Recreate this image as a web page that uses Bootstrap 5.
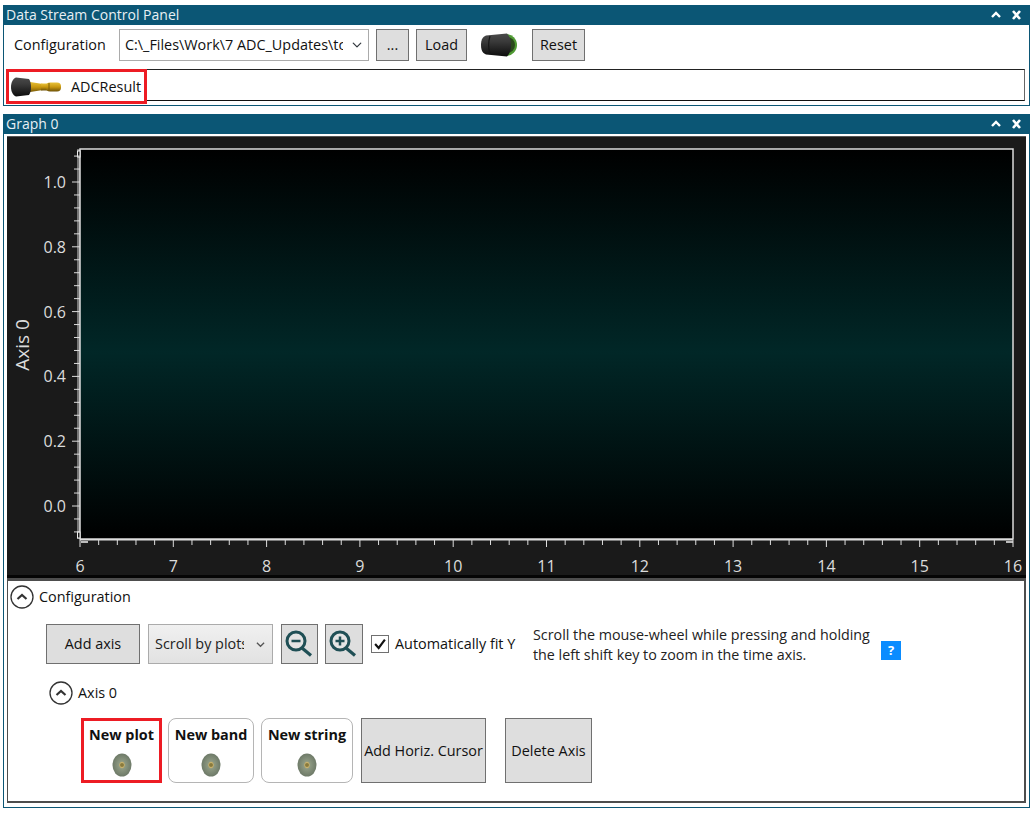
<!DOCTYPE html>
<html lang="en">
<head>
  <meta charset="UTF-8">
  <title>Data Stream Control Panel</title>
  <link href="https://cdn.jsdelivr.net/npm/bootstrap@5.3.2/dist/css/bootstrap.min.css" rel="stylesheet">
  <style>
    body { background: #fff; color: #111; font-family: "Open Sans", "Noto Sans", sans-serif; font-size: 14.4px; line-height: 20px; }
    .win { width: 1027px; margin-left: 3px; border: 1px solid #0b5675; border-top: 0; }
    .win-top { margin-top: 5px; height: 101px; }
    .win-graph { margin-top: 8px; height: 694px; }
    .win-bar { height: 20px; background: #0b5675; color: #e8f0f4; padding: 0 4px 0 2px; font-size: 14px; }
    .cfg-row { height: 44px; padding: 4px 0 0 10px; }
    .cfg-label { width: 105px; line-height: 32px; }
    .grey-btn { --bs-btn-padding-x: 0; --bs-btn-padding-y: 0; --bs-btn-font-size: 14.4px; --bs-btn-color: #111; --bs-btn-bg: #dedede; --bs-btn-border-color: #707070; --bs-btn-border-radius: 0; --bs-btn-hover-bg: #dedede; --bs-btn-hover-border-color: #707070; --bs-btn-line-height: 20px; flex: none; }
    .btn-dots { width: 33px; height: 32px; margin-right: 7px; }
    .btn-load { width: 51px; height: 32px; margin-right: 14px; }
    .btn-reset { width: 53px; height: 32px; margin-left: 15px; }
    .btn-add-axis { width: 94px; margin-right: 8px; }
    .btn-zoom-out { width: 37px; margin-right: 7px; }
    .btn-zoom-in { width: 38px; }
    .btn-cursor { width: 125px; height: 65px; margin-left: 8px; }
    .btn-delete { width: 87px; height: 65px; margin-left: 19px; }
    .sel-file { width: 250px; height: 32px; margin-right: 7px; border: 1px solid #ababab; border-radius: 0; font-size: 14.4px; color: #111; padding: 0 25px 0 5px; background-position: right 6px center; background-size: 10px 10px; }
    .knob-icon { margin-top: 4px; }
    .chan-box { height: 32px; margin: 0 4px 0 2px; border: 1px solid #111; border-top-color: #222; border-left-color: #777; border-right-color: #666; }
    .chan-chip { width: 141px; height: 35px; margin: -1px 0 0 -1px; border: 3px solid #ed1c24; padding-left: 2px; background: #fff; flex: none; }
    .chan-name { margin-left: 10px; }
    .graph-wrap { height: 442px; margin: 2px 3px 0 3px; background: #1a1a1a; border-top: 1px solid #555; }
    .graph-wrap svg { display: block; }
    .graph-text { font-family: "Open Sans", "Noto Sans", sans-serif; font-size: 16px; fill: #dcdcdc; }
    .axis-title { font-size: 19px; }
    .cfg-pane { height: 225px; margin: 0 3px 0 3px; border: 2px solid #4d4d4d; border-top-width: 3px; border-left-width: 1px; background: #fff; }
    .sect-head { height: 24px; }
    .head-config { margin: 4px 0 0 2px; }
    .head-axis { margin: 17px 0 0 41px; }
    .chev-gap { margin-right: 5px; }
    .tools-row { height: 40px; margin: 15px 0 0 38px; }
    .sel-mode { width: 125px; height: 40px; margin-right: 8px; border: 1px solid #ababab; border-radius: 0; font-size: 14.4px; color: #222; padding: 0 28px 0 6px; background: url("data:image/svg+xml,%3csvg xmlns='http://www.w3.org/2000/svg' viewBox='0 0 10 10'%3e%3cpath fill='none' stroke='%23555' stroke-width='1.4' d='M1 3l4 4 4-4'/%3e%3c/svg%3e") no-repeat right 7px center / 9px 9px, linear-gradient(#f0f0f0, #e2e2e2); }
    .fit-block { width: 146px; margin-left: 8px; }
    .fit-check { width: 18px; height: 18px; border: 1px solid #707070; background: #fff; flex: none; margin-right: 6px; }
    .hint-text { width: 348px; margin-left: 16px; padding-top: 1px; line-height: 20px; color: #222; font-size: 14.3px; white-space: nowrap; }
    .help-mark { width: 20px; height: 19px; margin-top: 17px; background: #0a8cff; color: #fff; font-weight: 700; font-size: 13px; line-height: 19px; flex: none; }
    .cards-row { margin: 13px 0 0 73px; }
    .add-card { height: 65px; border: 1px solid #b5b5b5; border-radius: 8px; background: #fff; font-weight: 700; padding-top: 6px; flex: none; }
    .add-card.is-picked { width: 81px; border: 3px solid #ed1c24; border-radius: 0; padding-top: 4px; }
    .card-band { width: 86px; margin-left: 6px; }
    .card-string { width: 92px; margin-left: 7px; }
  </style>
</head>
<body>
  <svg width="0" height="0" class="position-absolute">
    <defs>
      <linearGradient id="goldPin" x1="0" y1="0" x2="0" y2="1"><stop offset="0" stop-color="#e8c23a"/><stop offset=".5" stop-color="#c9980f"/><stop offset="1" stop-color="#6d5208"/></linearGradient>
      <linearGradient id="rubber" x1="0" y1="0" x2="0" y2="1"><stop offset="0" stop-color="#4a4a4a"/><stop offset=".35" stop-color="#3a3a3a"/><stop offset="1" stop-color="#0c0c0c"/></linearGradient>
      <linearGradient id="plotFill" x1="0" y1="0" x2="0" y2="1"><stop offset="0" stop-color="#000"/><stop offset=".52" stop-color="#012727"/><stop offset="1" stop-color="#000"/></linearGradient>
      <radialGradient id="discFill"><stop offset="0" stop-color="#e6d79a"/><stop offset=".25" stop-color="#c4ad6a"/><stop offset=".32" stop-color="#8e9a83"/><stop offset="1" stop-color="#6e7a68"/></radialGradient>
      <symbol id="chevCircle" viewBox="0 0 24 24"><circle cx="12" cy="12" r="11" fill="#fff" stroke="#333" stroke-width="1.3"/><path d="M7.500 14l4.500-4 4.500 4" fill="none" stroke="#333" stroke-width="2.200"/></symbol>
      <symbol id="winBtns" viewBox="0 0 34 12"><path d="M1 8l4-4 4 4" fill="none" stroke="#fff" stroke-width="2.400"/><path d="M22 2l7 8M29 2l-7 8" fill="none" stroke="#fff" stroke-width="2.600"/></symbol>
      <symbol id="discIcon" viewBox="0 0 20 24"><ellipse cx="10" cy="12" rx="9.500" ry="11.500" fill="url(#discFill)"/><circle cx="10" cy="12" r="2" fill="#8a7a3c"/></symbol>
    </defs>
  </svg>

  <div class="win win-top">
    <div class="win-bar d-flex justify-content-between align-items-center">
      <span>Data Stream Control Panel</span>
      <svg width="34" height="12"><use href="#winBtns"/></svg>
    </div>
    <div class="cfg-row d-flex align-items-start">
      <span class="cfg-label">Configuration</span>
      <select class="form-select sel-file"><option>C:\_Files\Work\7 ADC_Updates\tcp_settings.xml</option></select>
      <button class="btn grey-btn btn-dots">...</button>
      <button class="btn grey-btn btn-load">Load</button>
      <svg class="knob-icon" width="36" height="24" viewBox="0 0 36 24">
        <circle cx="25" cy="12" r="11" fill="#4f9a33"/>
        <circle cx="26" cy="12" r="8" fill="#2a4a1c"/>
        <path d="M5 2.500L26 .5c3 3 4 7 4 11.500s-1 8.500-4 11.500L5 21.500C1 20 0 16 0 12s1-8 5-9.500z" fill="url(#rubber)"/>
        <path d="M9 3c-1.500 5-1.500 13 0 18" fill="none" stroke="#161616" stroke-width="1.200"/>
      </svg>
      <button class="btn grey-btn btn-reset">Reset</button>
    </div>
    <div class="chan-box d-flex">
      <div class="chan-chip d-flex align-items-center">
        <svg width="50" height="24" viewBox="0 0 50 24">
          <path d="M16 6.500l16 2.500v6l-16 2.500z" fill="url(#goldPin)"/>
          <rect x="30" y="8.500" width="8" height="7" fill="url(#goldPin)"/>
          <rect x="35" y="7.500" width="15" height="9" rx="4" fill="url(#goldPin)"/>
          <path d="M38 8v8" stroke="#7a5c08"/>
          <path d="M5 2.500L18 4c1.500 2 2 5 2 8s-.5 6-2 8L5 21.500C2 20.500 0 16.500 0 12s2-8.500 5-9.500z" fill="url(#rubber)"/>
        </svg>
        <span class="chan-name">ADCResult</span>
      </div>
    </div>
  </div>

  <div class="win win-graph">
    <div class="win-bar d-flex justify-content-between align-items-center">
      <span>Graph 0</span>
      <svg width="34" height="12"><use href="#winBtns"/></svg>
    </div>
    <div class="graph-wrap">
      <svg id="graphSvg" width="1019" height="441" viewBox="7 137 1019 441"></svg>
    </div>
    <div class="cfg-pane">
      <div class="sect-head head-config d-flex align-items-center">
        <svg class="chev-gap" width="24" height="24"><use href="#chevCircle"/></svg>
        <span>Configuration</span>
      </div>
      <div class="tools-row d-flex">
        <button class="btn grey-btn btn-add-axis">Add axis</button>
        <select class="form-select sel-mode"><option>Scroll by plots</option></select>
        <button class="btn grey-btn btn-zoom-out d-flex align-items-center justify-content-center">
          <svg width="30" height="30" viewBox="0 0 30 30"><circle cx="11" cy="12" r="9" fill="#e4e4e4" stroke="#1f4f55" stroke-width="3"/><path d="M6.500 12h9" stroke="#1f4f55" stroke-width="2.500"/><path d="M17 19l9 7.500" stroke="#1f4f55" stroke-width="3.200"/></svg>
        </button>
        <button class="btn grey-btn btn-zoom-in d-flex align-items-center justify-content-center">
          <svg width="30" height="30" viewBox="0 0 30 30"><circle cx="11" cy="12" r="9" fill="#e4e4e4" stroke="#1f4f55" stroke-width="3"/><path d="M6.500 12h9M11 7.500v9" stroke="#1f4f55" stroke-width="2.500"/><path d="M17 19l9 7.500" stroke="#1f4f55" stroke-width="3.200"/></svg>
        </button>
        <div class="fit-block d-flex align-items-center">
          <svg class="fit-check" viewBox="0 0 18 18"><path d="M3.500 9l4 4.500 7-9.500" fill="none" stroke="#111" stroke-width="2.400"/></svg>
          <span class="text-nowrap">Automatically fit Y</span>
        </div>
        <div class="hint-text">Scroll the mouse-wheel while pressing and holding<br>the left shift key to zoom in the time axis.</div>
        <div class="help-mark text-center">?</div>
      </div>
      <div class="sect-head head-axis d-flex align-items-center">
        <svg class="chev-gap" width="24" height="24"><use href="#chevCircle"/></svg>
        <span>Axis 0</span>
      </div>
      <div class="cards-row d-flex">
        <div class="add-card is-picked text-center">New plot<br><svg class="mt-2" width="20" height="24"><use href="#discIcon"/></svg></div>
        <div class="add-card card-band text-center">New band<br><svg class="mt-2" width="20" height="24"><use href="#discIcon"/></svg></div>
        <div class="add-card card-string text-center">New string<br><svg class="mt-2" width="20" height="24"><use href="#discIcon"/></svg></div>
        <button class="btn grey-btn btn-cursor">Add Horiz. Cursor</button>
        <button class="btn grey-btn btn-delete">Delete Axis</button>
      </div>
    </div>
  </div>

  <script>
    const svg = document.getElementById("graphSvg");
    const yAt = v => 506 - v * 324;
    const xAt = v => 80 + (v - 6) * 93.3;
    let html = `<rect x="77" y="149" width="3" height="390" fill="#777"/>
      <rect x="80" y="149" width="933" height="390" fill="url(#plotFill)" stroke="#ddd" stroke-width="1.500"/>
      <rect x="80" y="539" width="933" height="1.500" fill="#ddd"/>
      <rect x="77.500" y="151" width="2.500" height="6" fill="#1a1a1a" stroke="#eee"/>
      <rect x="77.500" y="532" width="2.500" height="6" fill="#1a1a1a" stroke="#eee"/>
      <rect x="81" y="541" width="7" height="2" fill="#bbb"/>
      <rect x="1006" y="541" width="7" height="2" fill="#bbb"/>
      <rect x="7" y="575" width="1019" height="3" fill="#050505"/>`;

    for (let i = -3; i <= 27; i++) {
      const v = i * 0.04;
      const y = yAt(v);
      if (y < 150 || y > 537) continue;
      const major = i % 5 === 0;
      html += `<line x1="${major ? 72 : 74}" x2="80" y1="${y}" y2="${y}" stroke="#ddd"/>`;
      if (major) html += `<text class="graph-text" x="66" y="${y + 6}" text-anchor="end">${v.toFixed(1)}</text>`;
    }
    for (let i = 0; i <= 50; i++) {
      const x = xAt(6 + i / 5);
      const major = i % 5 === 0;
      html += `<line x1="${x}" x2="${x}" y1="540" y2="${major ? 547 : 545}" stroke="#ddd"/>`;
      if (major) html += `<text class="graph-text" x="${x}" y="572" text-anchor="middle">${6 + i / 5}</text>`;
    }
    html += `<text class="graph-text axis-title" text-anchor="middle" transform="translate(29 345) rotate(-90)">Axis 0</text>`;
    svg.innerHTML = html;
  </script>
  <script src="https://cdn.jsdelivr.net/npm/bootstrap@5.3.2/dist/js/bootstrap.bundle.min.js"></script>
</body>
</html>
